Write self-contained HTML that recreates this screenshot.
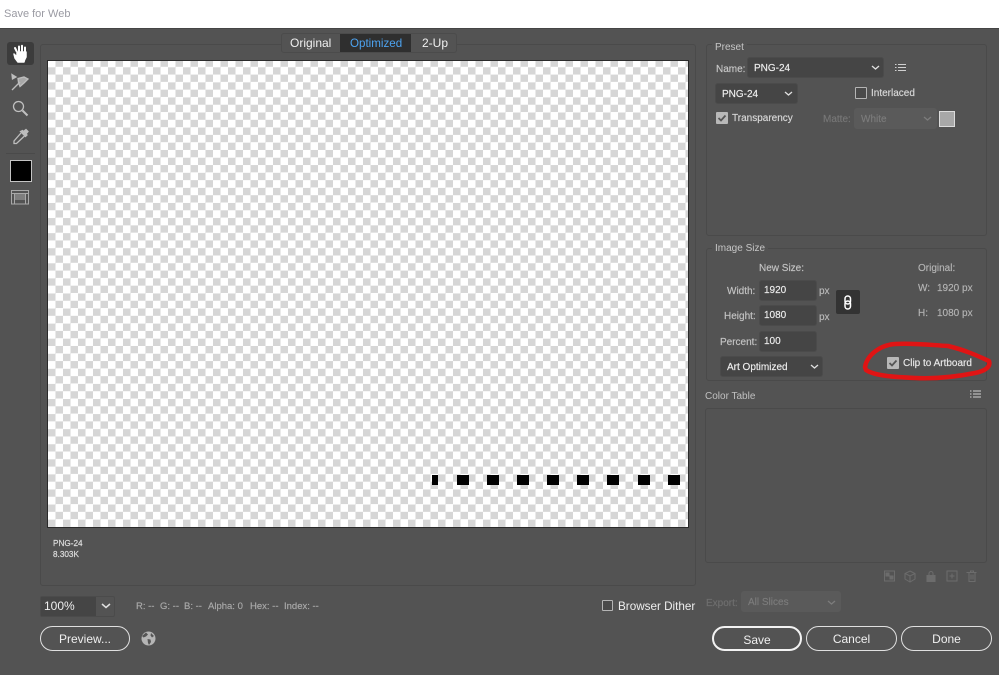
<!DOCTYPE html>
<html><head><meta charset="utf-8"><style>
html,body{margin:0;padding:0}
body{width:999px;height:675px;overflow:hidden;background:#535353;position:relative;font-family:"Liberation Sans",sans-serif;color:#e4e4e4}
.a{position:absolute;white-space:nowrap}
.t{position:absolute;white-space:nowrap;font-size:10px;line-height:12px;color:#d6d6d6;margin-top:1px;-webkit-text-stroke:.15px currentColor}
.g{position:absolute;border:1px solid #4a4a4a;border-radius:3px;box-sizing:border-box}
.dd{position:absolute;box-sizing:border-box;background:#454545;border:1px solid #4b4b4b;border-radius:3px;font-size:10px;color:#eee;padding-left:6px;white-space:nowrap;-webkit-text-stroke:.15px currentColor}
.dis{background:#5a5a5a;border-color:#5a5a5a;color:#7c7c7c}
.btn{position:absolute;box-sizing:border-box;border:1px solid #e0e0e0;border-radius:13px;text-align:center;font-size:12px;color:#f0f0f0;height:25px;line-height:25px}
svg{position:absolute;overflow:visible}
</style></head><body>
<div class="a" style="left:0;top:0;width:999px;height:28px;background:#fff"></div>
<div class="a" style="left:4px;top:7px;font-size:11px;line-height:14px;color:#9a9aa2">Save for Web</div>
<div class="a" style="left:0;top:28px;width:999px;height:1px;background:#454545"></div>

<!-- left tools -->
<div class="a" style="left:7px;top:42px;width:27px;height:23px;background:#3c3c3c;border-radius:3px"></div>
<svg style="left:7px;top:42px" width="27" height="23" viewBox="0 0 27 23" fill="none" stroke="#fff" stroke-linecap="round"><path d="M9.500 9L8 6M12 9V4.500M15 9V3.800M18 10V5.500" stroke-width="2"/><path d="M7 12l3 3v-5h9v5l-1.500 3-.5 2h-6l-3-4z" fill="#fff" stroke-width="1.500" stroke-linejoin="round"/></svg>
<svg style="left:10px;top:71px" width="20" height="20" viewBox="0 0 20 20" fill="none" stroke="#bdbdbd" stroke-width="1.300"><path d="M2 3.500l4 2.500-3.500 2z" fill="#bdbdbd"/><path d="M8 7.500l6-1.500 4 2-4 4-4 3.500-1.500-4z" fill="#a8a8a8"/><path d="M2 19l8-8" /></svg>
<svg style="left:12px;top:100px" width="17" height="17" viewBox="0 0 17 17" fill="none" stroke="#c0c0c0"><circle cx="6.500" cy="6.500" r="5" stroke-width="1.300"/><path d="M10.500 10.500l5 5" stroke-width="2"/></svg>
<svg style="left:12px;top:127px" width="17" height="18" viewBox="0 0 17 18" fill="none" stroke="#bdbdbd" stroke-width="1.300"><path d="M9 6l-7 8v2.500h2.500l8-7.500"/><path d="M8.500 4.500l5 5 1.500-1.500-1-1 2-2.500-2-2-2.500 2-1-1z" fill="#bdbdbd"/></svg>
<div class="a" style="left:6px;top:153px;width:29px;height:1px;background:#4a4a4a"></div>
<div class="a" style="left:10px;top:160px;width:20px;height:20px;background:#000;border:1px solid #c4c4c4"></div>
<svg style="left:11px;top:190px" width="18" height="15" viewBox="0 0 18 15" fill="none" stroke="#a8a8a8"><rect x=".5" y=".5" width="17" height="13.500"/><path d="M.5 3.500h17M3.500 3.500v10.500M14.500 3.500v10.500"/><rect x="4" y="4" width="10" height="6" fill="#7e7e7e" stroke="none"/></svg>

<!-- main group -->
<div class="g" style="left:40px;top:44px;width:656px;height:542px"></div>
<div class="a" style="left:281px;top:33px;width:176px;height:20px;box-sizing:border-box;background:#535353;border:1px solid #4b4b4b;border-radius:3px"></div>
<div class="a" style="left:340px;top:34px;width:71px;height:18px;background:#2f2f2f"></div>
<div class="a" style="left:290px;top:36px;font-size:12px;line-height:15px;color:#f0f0f0">Original</div>
<div class="a" style="left:350px;top:36px;font-size:11.600px;line-height:15px;color:#4da3f0">Optimized</div>
<div class="a" style="left:422px;top:36px;font-size:12px;line-height:15px;color:#f0f0f0">2-Up</div>

<!-- canvas -->
<div class="a" style="left:47px;top:60px;width:642px;height:468px;background:#2a2a2a"></div>
<div class="a" style="left:48px;top:61px;width:640px;height:466px;background-color:#fff;background-image:conic-gradient(#d6d6d6 25%,#fff 0 50%,#d6d6d6 0 75%,#fff 0);background-size:15px 15.080px;background-position:0 -1.500px"></div>
<div class="a" style="left:432px;top:475px;width:6px;height:10px;background:#000"></div>
<div class="a" style="left:457px;top:475px;width:12px;height:10px;background:#000"></div>
<div class="a" style="left:487px;top:475px;width:12px;height:10px;background:#000"></div>
<div class="a" style="left:517px;top:475px;width:12px;height:10px;background:#000"></div>
<div class="a" style="left:547px;top:475px;width:12px;height:10px;background:#000"></div>
<div class="a" style="left:577px;top:475px;width:12px;height:10px;background:#000"></div>
<div class="a" style="left:607px;top:475px;width:12px;height:10px;background:#000"></div>
<div class="a" style="left:638px;top:475px;width:12px;height:10px;background:#000"></div>
<div class="a" style="left:668px;top:475px;width:12px;height:10px;background:#000"></div>

<div class="t" style="left:53px;top:537px;font-size:8.200px;color:#e0e0e0">PNG-24</div>
<div class="t" style="left:53px;top:548px;font-size:8.200px;color:#e0e0e0">8.303K</div>

<!-- zoom / readouts -->
<div class="a" style="left:40px;top:596px;width:75px;height:21px;box-sizing:border-box;border:1px solid #4b4b4b;background:#535353;border-radius:2px"></div>
<div class="a" style="left:41px;top:597px;width:55px;height:19px;background:#454545"></div>
<div class="a" style="left:44px;top:599px;font-size:12px;line-height:15px;color:#eee">100%</div>
<svg style="left:101px;top:603px" width="10" height="6" viewBox="0 0 10 6" fill="none" stroke="#e0e0e0" stroke-width="1.500"><path d="M1 1l4 3.500L9 1"/></svg>
<div class="t" style="left:136px;top:600px;font-size:9.500px;color:#aaa">R: --</div>
<div class="t" style="left:160px;top:600px;font-size:9.500px;color:#aaa">G: --</div>
<div class="t" style="left:184px;top:600px;font-size:9.500px;color:#aaa">B: --</div>
<div class="t" style="left:208px;top:600px;font-size:9.500px;color:#aaa">Alpha: 0</div>
<div class="t" style="left:250px;top:600px;font-size:9.500px;color:#aaa">Hex: --</div>
<div class="t" style="left:284px;top:600px;font-size:9.500px;color:#aaa">Index: --</div>

<div class="a" style="left:602px;top:600px;width:11px;height:11px;box-sizing:border-box;border:1px solid #b5b5b5;border-radius:1px;background:#4a4a4a"></div>
<div class="a" style="left:618px;top:599px;font-size:11.700px;line-height:15px;color:#eee">Browser Dither</div>

<div class="btn" style="left:40px;top:626px;width:90px">Preview...</div>
<svg style="left:141px;top:631px" width="15" height="15" viewBox="0 0 15 15"><circle cx="7.500" cy="7.500" r="7" fill="#b5b5b5"/><path d="M5 1.500l2 2-2 2-2.500 1L1 5zM6.500 8l3 .5.500 2.500-2 3-1-2zM10 2l3 3-2 1.500-1.500-2z" fill="#555"/></svg>

<!-- preset -->
<div class="g" style="left:706px;top:44px;width:281px;height:192px"></div>
<div class="a" style="left:712px;top:41px;padding:0 3px;background:#535353;font-size:10px;line-height:13px;color:#c6c6c6">Preset</div>
<div class="t" style="left:716px;top:63px;color:#c8c8c8">Name:</div>
<div class="dd" style="left:747px;top:57px;width:137px;height:21px;line-height:22px">PNG-24</div>
<svg style="left:871px;top:65px" width="9" height="6" viewBox="0 0 9 6" fill="none" stroke="#e0e0e0" stroke-width="1.300"><path d="M1 1l3.500 3L8 1"/></svg>
<svg style="left:894px;top:63px" width="12" height="10" viewBox="0 0 12 10" fill="none" stroke="#d0d0d0"><path d="M4 1.500h8M4 4.500h8M4 7.500h8M1 1.500h1.500M1 4.500h1.500M1 7.500h1.500"/></svg>
<div class="dd" style="left:715px;top:83px;width:83px;height:21px;line-height:22px">PNG-24</div>
<svg style="left:784px;top:91px" width="9" height="6" viewBox="0 0 9 6" fill="none" stroke="#e0e0e0" stroke-width="1.300"><path d="M1 1l3.500 3L8 1"/></svg>
<div class="a" style="left:855px;top:87px;width:12px;height:12px;box-sizing:border-box;border:1px solid #b5b5b5;border-radius:1px;background:#4a4a4a"></div>
<div class="t" style="left:871px;top:87px;color:#d8d8d8">Interlaced</div>
<div class="a" style="left:716px;top:112px;width:12px;height:12px;background:#b8b8b8;border-radius:1px"></div>
<svg style="left:716px;top:112px" width="12" height="12" viewBox="0 0 12 12" fill="none" stroke="#555" stroke-width="1.800"><path d="M2.500 6l2.500 2.500 4.500-5"/></svg>
<div class="t" style="left:732px;top:112px;color:#d8d8d8">Transparency</div>
<div class="t" style="left:823px;top:113px;color:#777">Matte:</div>
<div class="dd dis" style="left:854px;top:108px;width:83px;height:21px;line-height:22px">White</div>
<svg style="left:923px;top:116px" width="9" height="6" viewBox="0 0 9 6" fill="none" stroke="#7c7c7c" stroke-width="1.300"><path d="M1 1l3.500 3L8 1"/></svg>
<div class="a" style="left:939px;top:111px;width:16px;height:16px;box-sizing:border-box;background:#a8a8a8;border:1px solid #dcdcdc"></div>

<!-- image size -->
<div class="g" style="left:706px;top:248px;width:281px;height:133px"></div>
<div class="a" style="left:712px;top:242px;padding:0 3px;background:#535353;font-size:10px;line-height:13px;color:#c6c6c6">Image Size</div>
<div class="t" style="left:759px;top:262px;color:#c4c4c4">New Size:</div>
<div class="t" style="left:918px;top:262px;color:#b4b4b4">Original:</div>
<div class="t" style="left:727px;top:285px;color:#c4c4c4">Width:</div>
<div class="t" style="left:724px;top:310px;color:#c4c4c4">Height:</div>
<div class="t" style="left:720px;top:336px;color:#c4c4c4">Percent:</div>
<div class="dd" style="left:759px;top:280px;width:58px;height:21px;line-height:20px;padding-left:4px">1920</div>
<div class="dd" style="left:759px;top:305px;width:58px;height:21px;line-height:20px;padding-left:4px">1080</div>
<div class="dd" style="left:759px;top:331px;width:58px;height:21px;line-height:20px;padding-left:4px">100</div>
<div class="t" style="left:819px;top:285px;color:#bbb">px</div>
<div class="t" style="left:819px;top:311px;color:#bbb">px</div>
<div class="a" style="left:836px;top:290px;width:24px;height:24px;background:#333;border-radius:2px"></div>
<svg style="left:843px;top:295px" width="10" height="15" viewBox="0 0 10 15" fill="none" stroke="#fff" stroke-width="1.500"><rect x="2" y="1" width="5.500" height="8" rx="2.700"/><rect x="2" y="6" width="5.500" height="8" rx="2.700"/></svg>
<div class="t" style="left:918px;top:282px;color:#b4b4b4">W:</div>
<div class="t" style="left:937px;top:282px;color:#b4b4b4">1920 px</div>
<div class="t" style="left:918px;top:307px;color:#b4b4b4">H:</div>
<div class="t" style="left:937px;top:307px;color:#b4b4b4">1080 px</div>
<div class="dd" style="left:720px;top:356px;width:103px;height:21px;line-height:22px">Art Optimized</div>
<svg style="left:810px;top:364px" width="9" height="6" viewBox="0 0 9 6" fill="none" stroke="#e0e0e0" stroke-width="1.300"><path d="M1 1l3.500 3L8 1"/></svg>
<div class="a" style="left:887px;top:357px;width:12px;height:12px;background:#b8b8b8;border-radius:1px"></div>
<svg style="left:887px;top:357px" width="12" height="12" viewBox="0 0 12 12" fill="none" stroke="#555" stroke-width="1.800"><path d="M2.500 6l2.500 2.500 4.500-5"/></svg>
<div class="t" style="left:903px;top:357px;font-size:10px;color:#e8e8e8">Clip to Artboard</div>
<svg style="left:0;top:0" width="999" height="675" viewBox="0 0 999 675" fill="none"><path d="M865 367C867 355 880 345 895 344C915 343 930 345 948 346C965 350 978 356 989 361C991 367 985 371 975 373C955 377 935 379 915 378C895 377 875 376 866 370Z" stroke="#e01414" stroke-width="4.500" stroke-linejoin="round"/></svg>

<!-- color table -->
<div class="a" style="left:705px;top:390px;font-size:10px;line-height:13px;color:#c0c0c0">Color Table</div>
<svg style="left:969px;top:390px" width="12" height="9" viewBox="0 0 12 9" fill="none" stroke="#d0d0d0"><path d="M4 1h8M4 4h8M4 7h8M1 1h1.500M1 4h1.500M1 7h1.500"/></svg>
<div class="g" style="left:705px;top:408px;width:282px;height:155px"></div>

<svg style="left:884px;top:570px" width="95" height="13" viewBox="0 0 95 13" fill="none" stroke="#6c6c6c"><rect x=".5" y="1" width="10" height="10"/><path d="M2 3h3v3H2zM6 6h3v3H6z" fill="#6c6c6c"/><path d="M26 1l5 2.500v5.500l-5 3-5-3V3.500zM21 3.500l5 2.500 5-2.500M26 6v6"/><rect x="43" y="5.500" width="8" height="6" fill="#6c6c6c"/><path d="M45 5.500V3.500a2 2 0 0 1 4 0v2"/><rect x="63" y="1" width="10" height="10"/><path d="M65.500 6h5M68 3.500v5"/><path d="M82.500 2.500h10M85 2.500v9h6v-9M86.500 2.500V1h3v1.500M87 4.500v5M89 4.500v5"/></svg>
<div class="t" style="left:706px;top:597px;color:#6f6f6f">Export:</div>
<div class="dd dis" style="left:741px;top:591px;width:100px;height:21px;line-height:22px">All Slices</div>
<svg style="left:827px;top:600px" width="9" height="6" viewBox="0 0 9 6" fill="none" stroke="#7c7c7c" stroke-width="1.300"><path d="M1 1l3.500 3L8 1"/></svg>

<div class="btn" style="left:712px;top:626px;width:90px;border-width:2px;line-height:24px;border-color:#f2f2f2">Save</div>
<div class="btn" style="left:806px;top:626px;width:91px">Cancel</div>
<div class="btn" style="left:901px;top:626px;width:91px">Done</div>
</body></html>
